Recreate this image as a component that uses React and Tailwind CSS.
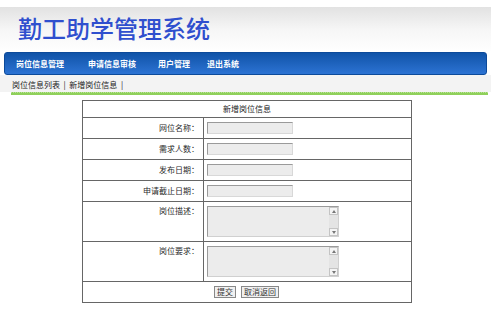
import React from 'react';

const font = { fontFamily: '"Noto Sans CJK SC", "Noto Sans", sans-serif' };

function Field() {
    return <div className="w-[86px] h-[12px] bg-[#ececec] border border-[#9a9a9a] border-r-[#d8d8d8] border-b-[#d8d8d8]" />;
}

function Area() {
    return (
        <div className="flex w-[132px] h-[31px] bg-[#ececec] border border-[#9a9a9a] border-r-[#d0d0d0] border-b-[#d0d0d0]">
            <div className="flex-1" />
            <div className="w-[9px] flex flex-col justify-between bg-[#e4e4e4]">
                <div className="h-[8px] border border-[#c4c4c4] bg-[#f4f4f4] flex items-center justify-center">
                    <div className="w-0 h-0 border-l-[2px] border-r-[2px] border-b-[3px] border-l-transparent border-r-transparent border-b-[#777]" />
                </div>
                <div className="h-[8px] border border-[#c4c4c4] bg-[#f4f4f4] flex items-center justify-center">
                    <div className="w-0 h-0 border-l-[2px] border-r-[2px] border-t-[3px] border-l-transparent border-r-transparent border-t-[#777]" />
                </div>
            </div>
        </div>
    );
}

function Row({ label, children }) {
    return (
        <tr className="h-[21px]">
            <td className="w-[121px] border border-[#666] text-right pr-[4px] text-[8px] text-[#2a2a2a]">{label}</td>
            <td className="border border-[#666] pl-[3px]">{children}</td>
        </tr>
    );
}

function AreaRow({ label }) {
    return (
        <tr className="h-[40px]">
            <td className="w-[121px] border border-[#666] text-right pr-[4px] text-[8px] text-[#2a2a2a] align-top pt-[3px]">{label}</td>
            <td className="border border-[#666] pl-[3px]"><Area /></td>
        </tr>
    );
}

export default function App() {
    return (
        <div className="w-[491px] h-[312px] bg-white overflow-hidden" style={font}>
            <div className="h-[52px] pt-[7px] bg-white">
                <div className="h-[45px] bg-gradient-to-b from-[#e2e2e2] via-[#f6f6f6] to-white pl-[18px] pt-[6px]">
                    <h1 className="text-[24px] leading-[30px] font-medium text-[#2f4fce]">勤工助学管理系统</h1>
                </div>
            </div>
            <div className="mx-[4px] h-[23px] rounded-[3px] bg-gradient-to-b from-[#0f53a8] to-[#2c73d3] border border-[#0c4a9a] flex items-center text-[8px] font-bold text-white">
                <span className="ml-[11px]">岗位信息管理</span>
                <span className="ml-[24px]">申请信息审核</span>
                <span className="ml-[22px]">用户管理</span>
                <span className="ml-[17px]">退出系统</span>
            </div>
            <div className="h-[17px] bg-[#f3f3f3] flex items-end pl-[12px] pb-[1px] text-[8px] text-[#222]">
                岗位信息列表 &nbsp;| &nbsp;新增岗位信息 &nbsp;|
            </div>
            <div className="ml-[11px] mr-[3px] h-[3px] border-t border-dotted border-[#b9e29a] bg-[#8fd05a]" />
            <div className="pt-[5px] pl-[82px]">
                <table className="w-[330px] border-collapse border border-[#666]">
                    <tbody>
                        <tr className="h-[17px]">
                            <td colSpan={2} className="border border-[#666] text-center text-[8px] text-[#222]">新增岗位信息</td>
                        </tr>
                        <Row label="网位名称："><Field /></Row>
                        <Row label="需求人数："><Field /></Row>
                        <Row label="发布日期："><Field /></Row>
                        <Row label="申请截止日期："><Field /></Row>
                        <AreaRow label="岗位描述：" />
                        <AreaRow label="岗位要求：" />
                        <tr className="h-[21px]">
                            <td colSpan={2} className="border border-[#666] pl-[131px]">
                                <div className="flex gap-[5px]">
                                    <button className="h-[12px] px-[2px] border border-[#888] bg-[#f0f0f0] text-[8px] leading-[10px] text-[#333]">提交</button>
                                    <button className="h-[12px] px-[2px] border border-[#888] bg-[#f0f0f0] text-[8px] leading-[10px] text-[#333]">取消返回</button>
                                </div>
                            </td>
                        </tr>
                    </tbody>
                </table>
            </div>
        </div>
    );
}
